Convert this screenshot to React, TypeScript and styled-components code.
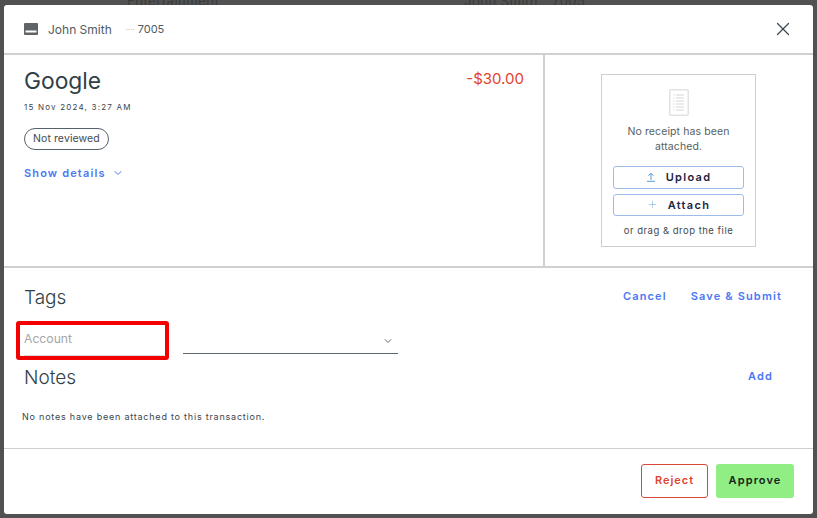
import React from 'react';
import styled, { createGlobalStyle } from 'styled-components';
import { ChevronDown, Plus, X } from 'lucide-react';

const GlobalStyle = createGlobalStyle`
  html, body {
    margin: 0;
    padding: 0;
    height: 100%;
    overflow: hidden;
    background: #515151;
  }
  body {
    font-family: "Inter", "Liberation Sans", sans-serif;
    color: #313f47;
  }
`;

const Backdrop = styled.div`
  width: 817px;
  height: 518px;
  background: #515151;
  padding: 5px 4px 4px 4px;
  box-sizing: border-box;
  position: relative;
  overflow: hidden;
`;

const BackdropText = styled.div<{ $left: number }>`
  position: absolute;
  top: -7px;
  left: ${p => p.$left}px;
  font-size: 13px;
  letter-spacing: 0.5px;
  color: #3b3b3b;
`;

const Modal = styled.div`
  position: relative;
  height: 509px;
  background: #fff;
  border-radius: 3px;
  display: flex;
  flex-direction: column;
`;

const Header = styled.header`
  height: 48px;
  flex: none;
  display: flex;
  align-items: center;
  padding: 0 19px 0 20px;
  border-bottom: 2px solid #d0d0d0;
`;

const CardName = styled.span`
  font-size: 12px;
  color: #4f5b62;
  margin-left: 10px;
`;

const CardDots = styled.span`
  font-size: 6px;
  color: #4f5b62;
  margin-left: 14px;
  letter-spacing: 0.5px;
`;

const CardNumber = styled.span`
  font-size: 11px;
  color: #4f5b62;
  margin-left: 3px;
`;

const CloseButton = styled.button`
  margin-left: auto;
  border: 0;
  padding: 0;
  background: none;
  display: flex;
  color: #3c474e;
`;

const Top = styled.section`
  height: 211px;
  flex: none;
  display: flex;
  border-bottom: 2px solid #d0d0d0;
  box-sizing: content-box;
`;

const Summary = styled.div`
  width: 541px;
  flex: none;
  box-sizing: border-box;
  padding: 13px 19px 0 20px;
  border-right: 2px solid #d0d0d0;
`;

const TitleRow = styled.div`
  display: flex;
  justify-content: space-between;
`;

const Merchant = styled.h1`
  margin: 0;
  font-size: 22.8px;
  line-height: 26px;
  font-weight: 400;
  color: #313f47;
`;

const Amount = styled.div`
  font-size: 15px;
  line-height: 22px;
  color: #e0432f;
`;

const DateLine = styled.div`
  font-size: 8px;
  line-height: 12px;
  font-weight: 400;
  letter-spacing: 1.2px;
  margin-top: 7px;
  color: #3a444b;
`;

const StatusPill = styled.div`
  display: inline-block;
  margin-top: 15px;
  height: 22px;
  line-height: 20px;
  box-sizing: border-box;
  padding: 0 8px;
  border: 1px solid #55626a;
  border-radius: 11px;
  font-size: 10.5px;
  letter-spacing: 0.1px;
  color: #3f4a51;
`;

const LinkButton = styled.button`
  border: 0;
  padding: 0;
  background: none;
  font: inherit;
  font-size: 11px;
  font-weight: 600;
  letter-spacing: 1.15px;
  color: #4a78f5;
`;

const DetailsRow = styled.div`
  display: flex;
  align-items: center;
  gap: 6px;
  margin-top: 16px;
  color: #4a78f5;
`;

const ReceiptPane = styled.div`
  flex: 1;
  display: flex;
  justify-content: flex-start;
  padding: 19px 0 0 56px;
`;

const ReceiptBox = styled.div`
  width: 155px;
  height: 173px;
  box-sizing: border-box;
  border: 1px solid #cfcfcf;
  display: flex;
  flex-direction: column;
  align-items: center;
  padding: 14px 11px 0;
`;

const ReceiptText = styled.p`
  margin: 8px 0 12px;
  font-size: 10.5px;
  line-height: 15px;
  letter-spacing: 0.1px;
  text-align: center;
  color: #565f65;
`;

const UploadButton = styled.button`
  width: 131px;
  height: 22.5px;
  flex: none;
  margin-bottom: 5px;
  padding: 0;
  border: 1px solid #9dbcec;
  border-radius: 3px;
  background: #fff;
  display: flex;
  align-items: center;
  justify-content: center;
  gap: 10px;
  font: inherit;
  font-size: 11px;
  font-weight: 600;
  letter-spacing: 1.3px;
  color: #1d2440;
`;

const DropHint = styled.div`
  margin-top: 4px;
  font-size: 9.5px;
  letter-spacing: 0.5px;
  white-space: nowrap;
  color: #3f4a51;
`;

const Body = styled.section`
  flex: 1;
  padding: 0 20px;
`;

const SectionRow = styled.div`
  display: flex;
  align-items: center;
  justify-content: space-between;
`;

const SectionTitle = styled.h2`
  margin: 0;
  font-size: 19px;
  line-height: 24px;
  font-weight: 300;
  color: #313f47;
`;

const Actions = styled.div`
  display: flex;
  gap: 24px;
  padding-right: 11px;
  margin-bottom: 4px;
`;

const TagsRow = styled(SectionRow)`
  margin-top: 18px;
`;

const FieldRow = styled.div`
  display: flex;
  gap: 19px;
  margin-top: 16px;
  height: 38px;
`;

const AccountField = styled.div`
  position: relative;
  width: 140px;
  height: 30px;
  box-sizing: border-box;
  border-bottom: 1px solid #dcdcdc;
  font-size: 12.2px;
  line-height: 25px;
  color: #a6a6a6;
`;

const Highlight = styled.div`
  position: absolute;
  left: -8px;
  top: -5px;
  width: 153px;
  height: 39px;
  box-sizing: border-box;
  border: 4px solid #f40000;
  border-radius: 3px;
`;

const SelectField = styled.div`
  width: 215px;
  height: 28px;
  box-sizing: border-box;
  border-bottom: 1px solid #5b676e;
  display: flex;
  align-items: flex-end;
  justify-content: flex-end;
  padding: 0 4px 6px 0;
  color: #46525a;
`;

const AddWrap = styled.div`
  padding: 0 20px 8px 0;
`;

const NotesEmpty = styled.p`
  margin: 19px 0 0 -2px;
  font-size: 9px;
  line-height: 12px;
  letter-spacing: 0.78px;
  color: #3a444b;
`;

const Footer = styled.footer`
  height: 66px;
  flex: none;
  box-sizing: border-box;
  border-top: 1px solid #cfcfcf;
  display: flex;
  align-items: flex-start;
  justify-content: flex-end;
  gap: 8px;
  padding: 15px 19px 0 0;
`;

const RejectButton = styled.button`
  width: 67px;
  height: 34px;
  padding: 0 0 2px;
  background: #fff;
  border: 1px solid #d9493a;
  border-radius: 3px;
  font: inherit;
  font-size: 11px;
  font-weight: 600;
  letter-spacing: 1px;
  color: #e0432f;
`;

const ApproveButton = styled.button`
  width: 78px;
  height: 34px;
  padding: 0 0 2px;
  background: #90ee85;
  border: 0;
  border-radius: 3px;
  font: inherit;
  font-size: 11px;
  font-weight: 600;
  letter-spacing: 1.1px;
  color: #16241a;
`;

const CardIcon = () => (
  <svg width="14" height="12" viewBox="0 0 14 12">
    <path d="M1 0h12a1 1 0 0 1 1 1v10a1 1 0 0 1-1 1H1a1 1 0 0 1-1-1V1a1 1 0 0 1 1-1z" fill="#5f6468" />
    <rect x="1.5" y="7.5" width="11" height="2" fill="#fff" />
  </svg>
);

const ReceiptIcon = () => (
  <svg width="20" height="27" viewBox="0 0 20 27" fill="none">
    <rect x="0.75" y="0.75" width="18.5" height="25.5" rx="1" stroke="#e2e2e2" strokeWidth="1.5" />
    <path d="M7 6h8M7 9h8M7 12h8M7 15h8M7 18h8M7 21h8" stroke="#d6d6d6" />
    <path d="M4 6h1.5M4 9h1.5M4 12h1.5M4 15h1.5M4 18h1.5M4 21h1.5" stroke="#dcdcdc" />
  </svg>
);

const UploadIcon = () => (
  <svg width="10" height="10" viewBox="0 0 10 10" fill="none" stroke="#5b9bd5">
    <path d="M5 8V1.5M2.5 3.8 5 1.2l2.5 2.6M1 9.3h8" />
  </svg>
);

export default function App() {
  return (
    <>
      <GlobalStyle />
      <Backdrop>
        <BackdropText $left={127}>Entertainment</BackdropText>
        <BackdropText $left={464}>John Smith</BackdropText>
        <BackdropText $left={552}>7005</BackdropText>
        <Modal>
          <Header>
            <CardIcon />
            <CardName>John Smith</CardName>
            <CardDots>····</CardDots>
            <CardNumber>7005</CardNumber>
            <CloseButton>
              <X size={22} strokeWidth={1.3} />
            </CloseButton>
          </Header>
          <Top>
            <Summary>
              <TitleRow>
                <Merchant>Google</Merchant>
                <Amount>-$30.00</Amount>
              </TitleRow>
              <DateLine>15 Nov 2024, 3:27 AM</DateLine>
              <StatusPill>Not reviewed</StatusPill>
              <DetailsRow>
                <LinkButton>Show details</LinkButton>
                <ChevronDown size={12} strokeWidth={2} />
              </DetailsRow>
            </Summary>
            <ReceiptPane>
              <ReceiptBox>
                <ReceiptIcon />
                <ReceiptText>No receipt has been attached.</ReceiptText>
                <UploadButton>
                  <UploadIcon />
                  Upload
                </UploadButton>
                <UploadButton>
                  <Plus size={11} strokeWidth={1} color="#5b9bd5" />
                  Attach
                </UploadButton>
                <DropHint>or drag &amp; drop the file</DropHint>
              </ReceiptBox>
            </ReceiptPane>
          </Top>
          <Body>
            <TagsRow>
              <SectionTitle>Tags</SectionTitle>
              <Actions>
                <LinkButton>Cancel</LinkButton>
                <LinkButton>Save &amp; Submit</LinkButton>
              </Actions>
            </TagsRow>
            <FieldRow>
              <AccountField>
                Account
                <Highlight />
              </AccountField>
              <SelectField>
                <ChevronDown size={12} strokeWidth={1.6} />
              </SelectField>
            </FieldRow>
            <SectionRow>
              <SectionTitle>Notes</SectionTitle>
              <AddWrap>
                <LinkButton>Add</LinkButton>
              </AddWrap>
            </SectionRow>
            <NotesEmpty>No notes have been attached to this transaction.</NotesEmpty>
          </Body>
          <Footer>
            <RejectButton>Reject</RejectButton>
            <ApproveButton>Approve</ApproveButton>
          </Footer>
        </Modal>
      </Backdrop>
    </>
  );
}
